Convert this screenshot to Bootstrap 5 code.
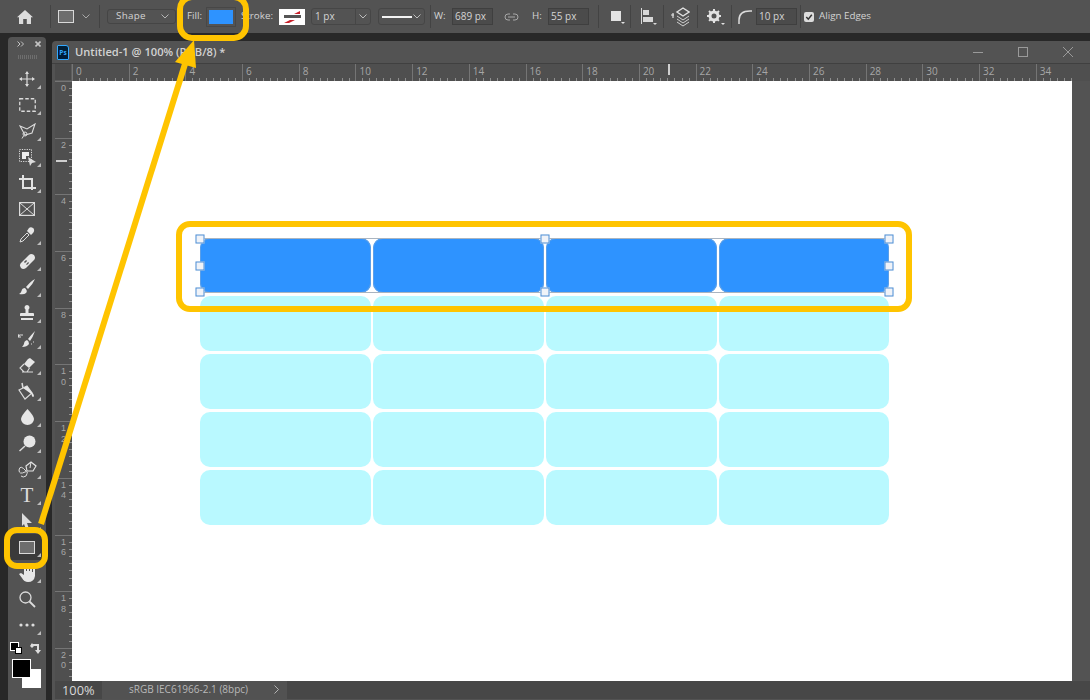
<!DOCTYPE html>
<html lang="en">
<head>
<meta charset="utf-8">
<title>Untitled-1</title>
<link href="https://cdn.jsdelivr.net/npm/bootstrap@5.3.0/dist/css/bootstrap.min.css" rel="stylesheet">
<style>
html,body{width:1090px;height:700px;overflow:hidden;background:#282828;}
body{font-family:"Open Sans","Liberation Sans",sans-serif;font-size:9.8px;color:#d4d4d4;}
svg{display:block;flex:none;}
.ps-options{height:33px;background:#535353;}
.ps-main{height:667px;}
.sep{width:1px;height:23px;background:#434343;flex:none;}
.m3{margin-left:3px}.m4{margin-left:4px}.m5{margin-left:5px}.m6{margin-left:6px}.m7{margin-left:7px}.m8{margin-left:8px}.m9{margin-left:9px}.m10{margin-left:10px}.m11{margin-left:11px}.m13{margin-left:13px}.m17{margin-left:17px}
.shape-swatch{width:16px;height:13px;background:#6d6d6d;border:1px solid #d9d9d9;flex:none;}
.shape-select{width:69px;height:15px;border:1px solid #454545;border-radius:3px;padding:0 6px 0 8px;flex:none;letter-spacing:.3px;}
.opt-label{flex:none;white-space:nowrap;}
.lbl-fill{width:14px;}.lbl-stroke{width:31px;}.lbl-w{width:12px;}.lbl-h{width:10px;}
.fill-well{width:30px;height:20px;border:1px solid #474747;padding:2px;flex:none;}
.fill-color{height:100%;background:#2e93ff;}
.stroke-well{width:26px;height:16px;background:#fff;flex:none;}
.num-select{width:60px;height:17px;border:1px solid #464646;border-radius:3px;padding-left:3px;font-size:10px;flex:none;}
.chev-box{width:15px;height:100%;border-left:1px solid #464646;}
.line-select{width:47px;height:17px;border:1px solid #464646;border-radius:3px;flex:none;padding-right:3px;}
.line-sample{width:30px;height:2px;background:#f2f2f2;margin-left:3px;}
.num-input{width:41px;height:17px;border:1px solid #3f3f3f;background:#4b4b4b;padding-left:2px;font-size:10px;flex:none;}
.ps-tools{width:38px;margin-left:8px;background:#535353;border-radius:4px 4px 0 0;flex:none;}
.tools-head{height:13px;padding:0 5px 0 9px;}
.tools-grip{width:19px;height:4px;margin:5px auto 7px;background:repeating-linear-gradient(90deg,#6e6e6e 0 1px,transparent 1px 2px);}
.tool-btn{height:26px;}
.tool-more::after{content:"";position:absolute;right:5px;bottom:3px;border:2px solid transparent;border-right-color:#bdbdbd;border-bottom-color:#bdbdbd;}
.tool-on{background:#3a3a3a;}
.tool-glyph{font-family:"Liberation Serif",serif;font-size:21px;line-height:26px;color:#dcdcdc;}
.swatch-zone{height:50px;margin-top:4px;}
.chip-fg{width:19px;height:19px;left:4px;top:17px;background:#000;border:1px solid #fff;z-index:2;}
.chip-bg{width:19px;height:19px;left:14px;top:27px;background:#fff;}
.mini-ico{left:2px;top:0;}
.swap-ico{left:22px;top:0;}
.ps-doc{margin-left:6px;margin-top:8px;background:#535353;border-radius:4px 0 0 0;min-width:0;}
.doc-title{height:23px;padding-left:5px;border-bottom:1px solid #404040;}
.ps-badge{width:12px;height:15px;background:#001e36;border:1px solid #31a8ff;border-radius:1px 3px 1px 1px;color:#31a8ff;font-size:6.5px;font-weight:700;line-height:13px;text-align:center;flex:none;}
.doc-name{margin-left:6px;font-size:11.15px;font-weight:600;color:#d2d2d2;white-space:nowrap;}
.win-btns{margin-left:auto;padding-right:17px;gap:35px;}
.ruler-top{height:17px;margin-left:3px;background:#4f4f4f;}
.ruler-corner{width:17px;height:17px;flex:none;background:#4a4a4a;border-right:1px solid #5e5e5e;border-bottom:1px solid #5e5e5e;}
.ruler-track{width:1000px;overflow:hidden;flex:none;}
.rh-cell{width:56.7px;height:17px;flex:none;border-left:1px solid #757575;padding-left:3px;font-size:10px;line-height:15px;color:#a6a6a6;background:repeating-linear-gradient(90deg,transparent 0 6.09px,#8e8e8e 6.09px 7.09px) 0 100%/100% 3px no-repeat;}
.ruler-mark-h{left:596px;top:0;width:2px;height:11px;background:#cfcfcf;}
.doc-body{height:600px;margin-left:3px;}
.ruler-left{width:17px;height:600px;flex:none;background:#4f4f4f;overflow:hidden;}
.rv-cell{height:56.7px;flex:none;border-top:1px solid #757575;padding:1px 0 0 6px;font-family:"Liberation Sans",sans-serif;font-size:9px;line-height:10.5px;color:#a6a6a6;background:repeating-linear-gradient(180deg,transparent 0 6.09px,#8e8e8e 6.09px 7.09px) 100% 0/3px 100% no-repeat;}
.ruler-mark-v{left:1px;top:79px;width:11px;height:2px;background:#cfcfcf;}
.ps-canvas{width:1000px;height:600px;background:#fff;padding:157px 0 0 128px;flex:none;}
.cell-wrap{width:689px;}
.cell-grid{display:grid;grid-template-columns:171px 171px 171px 170px;grid-auto-rows:55px;gap:3px 2px;}
.tbl-cell{background:#b9f9ff;border-radius:10px;}
.tbl-sel{background:#2e93ff;box-shadow:inset 0 0 0 1px #5b9fe8;}
.sel-box{left:0;top:0;width:689px;height:55px;border-top:1px solid #a9b4c0;border-bottom:1px solid #a9b4c0;}
.sel-h{width:9px;height:9px;background:#f0f3f8;border:1px solid #4f8fd6;transform:translate(-50%,-50%);}
.sel-l{left:0}.sel-c{left:50%}.sel-r{left:100%}.sel-t{top:0}.sel-m{top:50%}.sel-b{top:100%}
.doc-status{height:18px;margin-left:3px;background:#474747;}
.status-zoom{width:47px;height:18px;padding-left:7px;font-size:12.8px;line-height:18px;color:#d8d8d8;flex:none;}
.status-info{width:185px;height:18px;background:#525252;padding-left:27px;line-height:17px;font-size:10px;color:#b8b8b8;flex:none;}
.status-arrow{margin-left:auto;margin-right:8px;}
.callouts{z-index:10;pointer-events:none;}
</style>
</head>
<body class="position-relative">
<div class="ps-options d-flex align-items-center">
  <svg class="m17" width="16" height="16" viewBox="0 0 16 16"><path fill="#dcdcdc" d="M8 1 16 8.300H14V15H9.800V10H6.200V15H2V8.300H0Z"/></svg>
  <div class="sep m17"></div>
  <div class="shape-swatch m7"></div>
  <svg class="m8" width="8" height="5" viewBox="0 0 8 5"><path d="M.5.5 4 4 7.500.5" fill="none" stroke="#a8a8a8"/></svg>
  <div class="sep m9"></div>
  <div class="shape-select m7 d-flex align-items-center justify-content-between"><span>Shape</span><svg width="8" height="5" viewBox="0 0 8 5"><path d="M.5.5 4 4 7.500.5" fill="none" stroke="#b5b5b5"/></svg></div>
  <span class="opt-label lbl-fill m11">Fill:</span>
  <div class="fill-well m5"><div class="fill-color"></div></div>
  <span class="opt-label lbl-stroke m5">Stroke:</span>
  <div class="stroke-well m7"><svg width="26" height="16" viewBox="0 0 26 16"><path d="M5 7.500H22" stroke="#555" stroke-width="3"/><path d="M5 14 11 11H16L10 14ZM15 5 21 2V5Z" fill="#c8202a"/></svg></div>
  <div class="num-select m6 d-flex align-items-center justify-content-between"><span>1 px</span><div class="chev-box d-flex align-items-center justify-content-center"><svg width="8" height="5" viewBox="0 0 8 5"><path d="M.5.5 4 4 7.500.5" fill="none" stroke="#bdbdbd"/></svg></div></div>
  <div class="line-select m7 d-flex align-items-center justify-content-between"><div class="line-sample"></div><svg width="8" height="5" viewBox="0 0 8 5"><path d="M.5.5 4 4 7.500.5" fill="none" stroke="#bdbdbd"/></svg></div>
  <div class="sep m5"></div>
  <span class="opt-label lbl-w m3">W:</span>
  <div class="num-input m6 d-flex align-items-center">689 px</div>
  <svg class="m11" width="15" height="8" viewBox="0 0 15 8"><path d="M6 1H4a3 3 0 0 0 0 6H6M9 1h2a3 3 0 0 1 0 6H9M4 4h7" fill="none" stroke="#a8a8a8"/></svg>
  <span class="opt-label lbl-h m13">H:</span>
  <div class="num-input m6 d-flex align-items-center">55 px</div>
  <div class="sep m9"></div>
  <svg class="m11" width="15" height="15" viewBox="0 0 15 15"><path fill="#e2e2e2" d="M1 2H11V12H1ZM11 13H15L13 15Z"/></svg>
  <div class="sep m5"></div>
  <svg class="m10" width="16" height="17" viewBox="0 0 16 17"><path d="M.5 0V16" stroke="#d8d8d8"/><path fill="#d8d8d8" d="M2 2H8V7H2ZM2 9H12V14H2ZM12 15H16L14 17Z"/></svg>
  <div class="sep m6"></div>
  <svg class="m7" width="19" height="20" viewBox="0 0 19 20"><path d="M0 8H3M2 6V11" stroke="#e2e2e2" stroke-width="1.200"/><path d="M12 1 18 5 12 9 6 5Z" fill="none" stroke="#e2e2e2" stroke-width="1.400"/><path d="M6 9 12 13 18 9M6 12 12 16 18 12M6 15 12 19 18 15" fill="none" stroke="#d0d0d0"/></svg>
  <div class="sep m7"></div>
  <svg class="m9" width="18" height="16" viewBox="0 0 18 16"><circle cx="7" cy="7" r="4" fill="none" stroke="#e2e2e2" stroke-width="3"/><path d="M7 0V14M0 7H14M2 2 12 12M12 2 2 12" stroke="#e2e2e2" stroke-width="2" stroke-dasharray="3 8"/><path d="M14 14H18L16 16Z" fill="#e2e2e2"/></svg>
  <div class="sep m6"></div>
  <svg class="m6" width="14" height="14" viewBox="0 0 14 14"><path d="M1 14V10Q1 1 12 1H14" fill="none" stroke="#dcdcdc" stroke-width="1.500"/></svg>
  <div class="num-input m4 d-flex align-items-center">10 px</div>
  <div class="sep m3"></div>
  <svg class="m3" width="10" height="10" viewBox="0 0 10 10"><rect width="10" height="10" rx="2" fill="#dcdcdc"/><path d="M2.300 5 4.300 7.200 7.800 2.800" fill="none" stroke="#333" stroke-width="1.500"/></svg>
  <span class="opt-label m5">Align Edges</span>
</div>

<div class="ps-main d-flex">
  <aside class="ps-tools d-flex flex-column mt-1">
    <div class="tools-head d-flex align-items-center justify-content-between">
      <svg width="7" height="6" viewBox="0 0 7 6"><path d="M.5.500 3 3 .5 5.500M4 .5 6.500 3 4 5.500" fill="none" stroke="#c4c4c4"/></svg>
      <svg width="6" height="6" viewBox="0 0 6 6"><path d="M.5.500 5.500 5.500M5.500.5.5 5.500" stroke="#c4c4c4" stroke-width="1.600"/></svg>
    </div>
    <div class="tools-grip"></div>
    <div class="tool-btn tool-more position-relative d-flex align-items-center justify-content-center"><svg width="16" height="16" viewBox="0 0 16 16"><path d="M8 1V15M1 8H15" stroke="#dcdcdc" stroke-width="1.200"/><path fill="#dcdcdc" d="M8 0 10 3H6ZM8 16 10 13H6ZM0 8 3 6V10ZM16 8 13 6V10Z"/></svg></div>
    <div class="tool-btn tool-more position-relative d-flex align-items-center justify-content-center"><svg width="17" height="14" viewBox="0 0 17 14"><rect x=".75" y=".75" width="15.500" height="12.500" fill="none" stroke="#dcdcdc" stroke-width="1.300" stroke-dasharray="3.500 2"/></svg></div>
    <div class="tool-btn tool-more position-relative d-flex align-items-center justify-content-center"><svg width="17" height="16" viewBox="0 0 17 16"><path d="M1 3 8 6 16 1 13 10 6 12Z" fill="none" stroke="#dcdcdc" stroke-width="1.100"/><circle cx="6" cy="11" r="2" fill="none" stroke="#dcdcdc"/><path d="M4.500 13 3 15.500" stroke="#dcdcdc"/></svg></div>
    <div class="tool-btn tool-more position-relative d-flex align-items-center justify-content-center"><svg width="17" height="17" viewBox="0 0 17 17"><rect x=".5" y=".5" width="12" height="12" fill="none" stroke="#dcdcdc" stroke-dasharray="1.200 1.200"/><path fill="#eee" d="M3 3H10V7H7V10H3Z"/><path fill="#dcdcdc" d="M9 8 17 13 13 14 11 17Z"/></svg></div>
    <div class="tool-btn tool-more position-relative d-flex align-items-center justify-content-center"><svg width="17" height="17" viewBox="0 0 17 17"><path d="M0 4H13V15M4 0V13H17" fill="none" stroke="#e2e2e2" stroke-width="2"/></svg></div>
    <div class="tool-btn position-relative d-flex align-items-center justify-content-center"><svg width="16" height="14" viewBox="0 0 16 14"><rect x=".6" y=".6" width="14.800" height="12.800" fill="none" stroke="#dcdcdc" stroke-width="1.200"/><path d="M1 1 15 13M15 1 1 13" stroke="#dcdcdc"/></svg></div>
    <div class="tool-btn tool-more position-relative d-flex align-items-center justify-content-center"><svg width="16" height="16" viewBox="0 0 16 16"><path d="M8 6 2 12 1 15 4 14 10 8Z" fill="none" stroke="#dcdcdc"/><path fill="#e6e6e6" d="M8 4 10 1Q12-.5 14.500 1.500 16 4 14 6L12 8Z"/></svg></div>
    <div class="tool-btn tool-more position-relative d-flex align-items-center justify-content-center"><svg width="17" height="17" viewBox="0 0 17 17"><path d="M2 10 10 2Q12 0 15 2 17 5 15 7L7 15Q4 17 2 15 0 12 2 10Z" fill="#e6e6e6"/><path d="M6 8 9 11" stroke="#535353" stroke-width="3" stroke-dasharray="1.500 1.500"/></svg></div>
    <div class="tool-btn tool-more position-relative d-flex align-items-center justify-content-center"><svg width="16" height="16" viewBox="0 0 16 16"><path fill="#e6e6e6" d="M16 0Q12 2 7 8L9 10Q14 5 16 0ZM6 9Q3 9 2.500 12 2 14 0 15 5 16 7 14 9 12 6 9Z"/></svg></div>
    <div class="tool-btn tool-more position-relative d-flex align-items-center justify-content-center"><svg width="16" height="16" viewBox="0 0 16 16"><path fill="#e6e6e6" d="M8 0A2.500 2.500 0 0 1 9.500 4.500V8H14Q15 8 15 9V11H1V9Q1 8 2 8H6.500V4.500A2.500 2.500 0 0 1 8 0ZM2 13H14V15H2Z"/></svg></div>
    <div class="tool-btn tool-more position-relative d-flex align-items-center justify-content-center"><svg width="18" height="17" viewBox="0 0 18 17"><path fill="#e6e6e6" d="M17 0Q14 3 10 8L12 10Q15 6 17 0ZM9 9Q6 10 6 13 5 15 4 16 9 16 11 13 11 10 9 9Z"/><path d="M0 6Q2 3 5 4M1 3 0 6 3 6" fill="none" stroke="#dcdcdc"/><path d="M13 13H14M15 11H16" stroke="#dcdcdc" stroke-dasharray="1 1"/></svg></div>
    <div class="tool-btn tool-more position-relative d-flex align-items-center justify-content-center"><svg width="17" height="15" viewBox="0 0 17 15"><path fill="#e6e6e6" d="M9 1 11 0 16 4 10 10 5 6Z"/><path d="M5 6 1 10 5 14H8L10.500 10M3 14H14" fill="none" stroke="#dcdcdc" stroke-width="1.100"/></svg></div>
    <div class="tool-btn tool-more position-relative d-flex align-items-center justify-content-center"><svg width="18" height="18" viewBox="0 0 18 18"><path d="M1 8 9 4 14 11 7 17Z" fill="none" stroke="#dcdcdc" stroke-width="1.200"/><path d="M5 6 4 1" stroke="#dcdcdc" stroke-width="1.500"/><path fill="#e6e6e6" d="M5 6 9 4 13 9.500Q16 12 16 14 15 16 14 14 14 12 12 11Z"/></svg></div>
    <div class="tool-btn tool-more position-relative d-flex align-items-center justify-content-center"><svg width="13" height="16" viewBox="0 0 13 16"><path fill="#e6e6e6" d="M6.500 0Q13 7 13 10A6.500 6 0 0 1 0 10Q0 7 6.500 0Z"/></svg></div>
    <div class="tool-btn tool-more position-relative d-flex align-items-center justify-content-center"><svg width="17" height="17" viewBox="0 0 17 17"><circle cx="10.500" cy="6.500" r="6" fill="#e6e6e6"/><path d="M6 11 .5 16" stroke="#dcdcdc" stroke-width="1.500"/></svg></div>
    <div class="tool-btn tool-more position-relative d-flex align-items-center justify-content-center"><svg width="19" height="17" viewBox="0 0 19 17"><path d="M8 5 13 1 18 5 15 10 9 10Z" fill="none" stroke="#e2e2e2" stroke-width="1.200"/><path d="M13 1 12 7" stroke="#e2e2e2"/><path d="M8 10Q2 3 1 9 1 14 7 11 11 9 8 15 5 17 3 15" fill="none" stroke="#dcdcdc"/></svg></div>
    <div class="tool-btn tool-more position-relative d-flex align-items-center justify-content-center"><span class="tool-glyph">T</span></div>
    <div class="tool-btn tool-more position-relative d-flex align-items-center justify-content-center"><svg width="12" height="16" viewBox="0 0 12 16"><path fill="#dcdcdc" d="M1 0 11 10H6L8 16 5 16 3 11 1 13Z"/></svg></div>
    <div class="tool-btn tool-more tool-on position-relative d-flex align-items-center justify-content-center"><div class="shape-swatch"></div></div>
    <div class="tool-btn tool-more position-relative d-flex align-items-center justify-content-center"><svg width="16" height="17" viewBox="0 0 16 17"><path fill="#e6e6e6" d="M5 1H7V6H8V0H10V6H11V1H13V7H14V4H16V11Q15 17 9 17 5 17 3 13L0 9 2 8 5 10Z"/></svg></div>
    <div class="tool-btn position-relative d-flex align-items-center justify-content-center"><svg width="17" height="17" viewBox="0 0 17 17"><circle cx="6.500" cy="6.500" r="5.500" fill="none" stroke="#dcdcdc" stroke-width="1.300"/><path d="M10.500 10.500 16 16" stroke="#dcdcdc" stroke-width="1.800"/></svg></div>
    <div class="tool-btn tool-more position-relative d-flex align-items-center justify-content-center"><svg width="16" height="4" viewBox="0 0 16 4"><circle cx="2" cy="2" r="1.600" fill="#dcdcdc"/><circle cx="8" cy="2" r="1.600" fill="#dcdcdc"/><circle cx="14" cy="2" r="1.600" fill="#dcdcdc"/></svg></div>
    <div class="swatch-zone position-relative">
      <svg class="position-absolute mini-ico" width="12" height="13" viewBox="0 0 12 13"><rect x=".5" y=".5" width="8" height="8" fill="#000" stroke="#fff"/><rect x="5.500" y="5.500" width="6" height="6" fill="#fff" stroke="#000"/></svg>
      <svg class="position-absolute swap-ico" width="12" height="12" viewBox="0 0 12 12"><path d="M2 5V3H8V9" fill="none" stroke="#dcdcdc" stroke-width="2"/><path fill="#dcdcdc" d="M0 4 2 6 4 4 2 1ZM5 8H11L8 12Z"/></svg>
      <div class="chip-bg position-absolute"></div>
      <div class="chip-fg position-absolute"></div>
    </div>
  </aside>

  <section class="ps-doc flex-grow-1 d-flex flex-column">
    <div class="doc-title d-flex align-items-center">
      <div class="ps-badge">Ps</div>
      <span class="doc-name">Untitled-1 @ 100% (RGB/8) *</span>
      <div class="win-btns d-flex align-items-center">
        <svg width="10" height="10" viewBox="0 0 10 10"><path d="M0 5.500H10" stroke="#9a9a9a"/></svg>
        <svg width="10" height="10" viewBox="0 0 10 10"><rect x=".5" y=".5" width="9" height="9" fill="none" stroke="#9a9a9a"/></svg>
        <svg width="10" height="10" viewBox="0 0 10 10"><path d="M0 0 10 10M10 0 0 10" stroke="#9a9a9a"/></svg>
      </div>
    </div>
    <div class="ruler-top d-flex">
      <div class="ruler-corner"></div>
      <div class="ruler-track d-flex position-relative">
        <div class="rh-cell">0</div><div class="rh-cell">2</div><div class="rh-cell">4</div><div class="rh-cell">6</div><div class="rh-cell">8</div><div class="rh-cell">10</div><div class="rh-cell">12</div><div class="rh-cell">14</div><div class="rh-cell">16</div><div class="rh-cell">18</div><div class="rh-cell">20</div><div class="rh-cell">22</div><div class="rh-cell">24</div><div class="rh-cell">26</div><div class="rh-cell">28</div><div class="rh-cell">30</div><div class="rh-cell">32</div><div class="rh-cell">34</div>
        <div class="ruler-mark-h position-absolute"></div>
      </div>
    </div>
    <div class="doc-body d-flex">
      <div class="ruler-left d-flex flex-column position-relative">
        <div class="rv-cell">0</div><div class="rv-cell">2</div><div class="rv-cell">4</div><div class="rv-cell">6</div><div class="rv-cell">8</div><div class="rv-cell">1<br>0</div><div class="rv-cell">1<br>2</div><div class="rv-cell">1<br>4</div><div class="rv-cell">1<br>6</div><div class="rv-cell">1<br>8</div><div class="rv-cell">2<br>0</div>
        <div class="ruler-mark-v position-absolute"></div>
      </div>
      <div class="ps-canvas">
        <div class="cell-wrap position-relative">
          <div class="cell-grid">
            <div class="tbl-cell tbl-sel"></div><div class="tbl-cell tbl-sel"></div><div class="tbl-cell tbl-sel"></div><div class="tbl-cell tbl-sel"></div>
            <div class="tbl-cell"></div><div class="tbl-cell"></div><div class="tbl-cell"></div><div class="tbl-cell"></div>
            <div class="tbl-cell"></div><div class="tbl-cell"></div><div class="tbl-cell"></div><div class="tbl-cell"></div>
            <div class="tbl-cell"></div><div class="tbl-cell"></div><div class="tbl-cell"></div><div class="tbl-cell"></div>
            <div class="tbl-cell"></div><div class="tbl-cell"></div><div class="tbl-cell"></div><div class="tbl-cell"></div>
          </div>
          <div class="sel-box position-absolute">
            <div class="sel-h sel-l sel-t position-absolute"></div><div class="sel-h sel-c sel-t position-absolute"></div><div class="sel-h sel-r sel-t position-absolute"></div>
            <div class="sel-h sel-l sel-m position-absolute"></div><div class="sel-h sel-r sel-m position-absolute"></div>
            <div class="sel-h sel-l sel-b position-absolute"></div><div class="sel-h sel-c sel-b position-absolute"></div><div class="sel-h sel-r sel-b position-absolute"></div>
          </div>
        </div>
      </div>
    </div>
    <div class="doc-status d-flex">
      <div class="status-zoom">100%</div>
      <div class="status-info d-flex justify-content-between">
        <span>sRGB IEC61966-2.1 (8bpc)</span>
        <svg class="status-arrow mt-1" width="5" height="9" viewBox="0 0 5 9"><path d="M.5.5 4.500 4.500.5 8.500" fill="none" stroke="#b4b4b4"/></svg>
      </div>
    </div>
  </section>
</div>

<svg class="callouts position-absolute top-0 start-0" width="1090" height="700" viewBox="0 0 1090 700">
  <g fill="none" stroke="#ffc400" stroke-width="6">
    <rect x="180" y="-3" width="66" height="41" rx="12"/>
    <rect x="7" y="530" width="38" height="36" rx="10"/>
    <rect x="179" y="224" width="730" height="85" rx="11"/>
    <path d="M41 524 185 64"/>
  </g>
  <path fill="#ffc400" d="M194 40 175 62 196 68Z"/>
</svg>
<script src="https://cdn.jsdelivr.net/npm/bootstrap@5.3.0/dist/js/bootstrap.bundle.min.js"></script>
</body>
</html>
